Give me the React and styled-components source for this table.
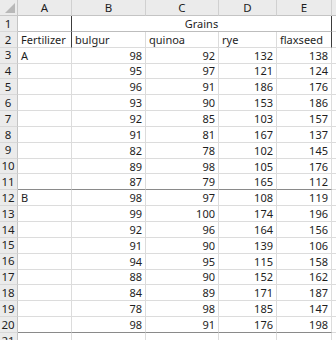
import React from 'react';
import styled, { createGlobalStyle } from 'styled-components';

const GlobalStyle = createGlobalStyle`
  html, body {
    margin: 0;
    padding: 0;
    background: #ffffff;
    overflow: hidden;
  }
`;

const Sheet = styled.div`
  display: grid;
  grid-template-columns: 18px 54px 74px 73px 58px 55px 1fr;
  grid-template-rows: 16px;
  grid-auto-rows: 15.85px;
  width: 336px;
  height: 340px;
  overflow: hidden;
  font-family: 'Noto Sans', 'Liberation Sans', sans-serif;
  font-size: 11px;
  color: #1e1e1e;
`;

const Corner = styled.div`
  background: #ebebeb;
  border-right: 1px solid #c8c8c8;
  border-bottom: 1px solid #c8c8c8;
  position: relative;
  svg {
    position: absolute;
    right: 2px;
    bottom: 2px;
  }
`;

const ColHead = styled.div`
  background: #ebebeb;
  border-right: 1px solid #d0d0d0;
  border-bottom: 1px solid #c4c4c4;
  display: flex;
  align-items: center;
  justify-content: center;
  line-height: 1;
  font-size: 11.5px;
`;

const RowHead = styled.div`
  background: #ebebeb;
  border-right: 1px solid #c4c4c4;
  border-bottom: 1px solid #d8d8d8;
  display: flex;
  align-items: center;
  justify-content: center;
  line-height: 1;
  padding-right: 1px;
  font-size: 11.5px;
`;

const Cell = styled.div`
  grid-column: ${(p) => p.$span ? `span ${p.$span}` : 'auto'};
  border-right: 1px solid ${(p) => p.$right || '#dcdcdc'};
  border-bottom: 1px solid ${(p) => p.$bottom || '#dcdcdc'};
  display: flex;
  align-items: center;
  justify-content: ${(p) => p.$align || 'flex-start'};
  padding: 0 3px;
  line-height: 1;
  white-space: nowrap;
  overflow: hidden;
`;

const cols = ['A', 'B', 'C', 'D', 'E', ''];

const groups = [
  {
    name: 'A',
    rows: [
      [98, 92, 132, 138],
      [95, 97, 121, 124],
      [96, 91, 186, 176],
      [93, 90, 153, 186],
      [92, 85, 103, 157],
      [91, 81, 167, 137],
      [82, 78, 102, 145],
      [89, 98, 105, 176],
      [87, 79, 165, 112],
    ],
  },
  {
    name: 'B',
    rows: [
      [98, 97, 108, 119],
      [99, 100, 174, 196],
      [92, 96, 164, 156],
      [91, 90, 139, 106],
      [94, 95, 115, 158],
      [88, 90, 152, 162],
      [84, 89, 171, 187],
      [78, 98, 185, 147],
      [98, 91, 176, 198],
    ],
  },
];

const DARK = '#3c3c3c';
const GROUP_LINE = '#8a8a8a';

const App = () => {
  let rowNo = 3;
  const body = [];

  groups.forEach((g) => {
    g.rows.forEach((vals, i) => {
      const last = i === g.rows.length - 1;
      const bottom = last ? GROUP_LINE : undefined;
      body.push(<RowHead key={`h${rowNo}`}>{rowNo}</RowHead>);
      body.push(
        <Cell key={`a${rowNo}`} $bottom={bottom}>
          {i === 0 ? g.name : ''}
        </Cell>
      );
      vals.forEach((v, j) => {
        body.push(
          <Cell key={`v${rowNo}-${j}`} $align="flex-end" $bottom={bottom}>
            {v}
          </Cell>
        );
      });
      body.push(<Cell key={`f${rowNo}`} />);
      rowNo += 1;
    });
  });

  return (
    <>
      <GlobalStyle />
      <Sheet>
        <Corner>
          <svg width="10" height="10" viewBox="0 0 10 10">
            <polygon points="10,0 10,10 0,10" fill="#b8b8b8" />
          </svg>
        </Corner>
        {cols.map((c, i) => (
          <ColHead key={`c${i}`}>{c}</ColHead>
        ))}

        <RowHead>1</RowHead>
        <Cell $right={DARK} $bottom="#bdbdbd" />
        <Cell $span={4} $align="center" $right={DARK} $bottom="#bdbdbd">
          Grains
        </Cell>
        <Cell />

        <RowHead>2</RowHead>
        <Cell $right={DARK}>Fertilizer</Cell>
        <Cell>bulgur</Cell>
        <Cell>quinoa</Cell>
        <Cell>rye</Cell>
        <Cell $right={DARK}>flaxseed</Cell>
        <Cell />

        {body}

        <RowHead>21</RowHead>
        <Cell />
        <Cell />
        <Cell />
        <Cell />
        <Cell />
        <Cell />
      </Sheet>
    </>
  );
};

export default App;
